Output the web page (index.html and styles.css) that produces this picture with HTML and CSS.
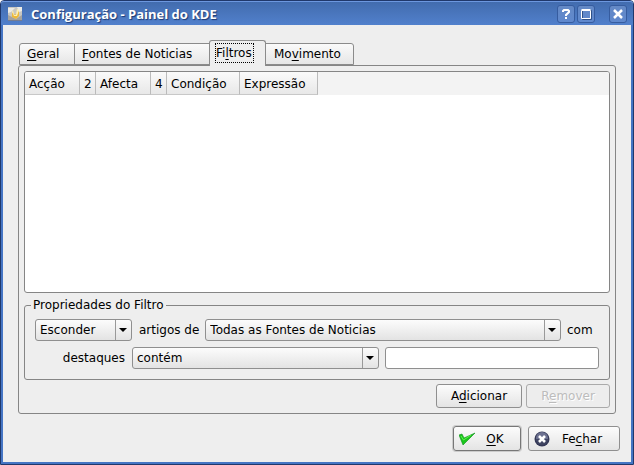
FILE: index.html
```html
<!DOCTYPE html>
<html lang="pt">
<head>
<meta charset="utf-8">
<title>Configuração - Painel do KDE</title>
<link rel="stylesheet" href="styles.css">
</head>
<body>
<div class="window">
  <header class="titlebar">
    <svg class="app-icon" viewBox="0 0 16 16" aria-hidden="true">
      <rect x="1" y="1" width="14" height="14" fill="#c9c7c1"/>
      <path d="M1 2h7L4 6l-3 1zM10 1h5v4l-3 1z" fill="#ecebe5"/>
      <path d="M1 9l4 2 4 2 6-4v5H1z" fill="#a5a39e"/>
      <path d="M5 6l3 3 4-4v5l-3 3-4-2z" fill="#edb93a"/>
      <path d="M6 4l1 5h2l1-6 2 1-2 6H7L5 6z" fill="#fff0b0"/>
      <path d="M1 14.500h14" stroke="#747c91"/>
    </svg>
    <h1 class="title">Configuração - Painel do KDE</h1>
    <button class="win-btn" type="button" aria-label="Ajuda">
      <svg viewBox="0 0 16 16"><path class="question" d="M5 6V5l1-1h4l1 1v1L8 9v1"/><path d="M7 11h2v2H7z"/></svg>
    </button>
    <button class="win-btn" type="button" aria-label="Maximizar">
      <svg viewBox="0 0 16 16"><path class="shade" d="M4.500 4.500h9v9h-9z"/><path class="line" d="M3.500 4.500h9v8h-9zM3.500 3.500h9"/></svg>
    </button>
    <button class="win-btn win-close" type="button" aria-label="Fechar janela">
      <svg viewBox="0 0 16 16"><path class="cross" d="M4 4l8 8M12 4l-8 8"/></svg>
    </button>
  </header>
  <main class="content">
    <div class="tabs" role="tablist">
      <button class="tab tab-geral" type="button" role="tab"><span><u>G</u>eral</span></button>
      <button class="tab tab-fontes" type="button" role="tab"><span><u>F</u>ontes de Noticias</span></button>
      <button class="tab active" type="button" role="tab" aria-selected="true"><span>Fi<u>l</u>tros</span></button>
      <button class="tab tab-mov" type="button" role="tab"><span>Mo<u>v</u>imento</span></button>
    </div>
    <section class="panel" role="tabpanel">
      <div class="list">
        <table class="filters">
          <colgroup><col class="c-action"><col class="c-num"><col class="c-affects"><col class="c-num"><col class="c-cond"><col class="c-expr"><col></colgroup>
          <thead><tr><th>Acção</th><th>2</th><th>Afecta</th><th>4</th><th>Condição</th><th>Expressão</th><td></td></tr></thead>
        </table>
      </div>
      <fieldset class="group">
        <legend>Propriedades do Filtro</legend>
        <div class="row">
          <span class="combo combo-action"><select id="action" aria-label="Acção"><option>Esconder</option></select></span>
          <label for="source">artigos de</label>
          <span class="combo combo-source"><select id="source"><option>Todas as Fontes de Noticias</option></select></span>
          <span class="with">com</span>
        </div>
        <div class="row">
          <label class="headlines" for="condition">destaques</label>
          <span class="combo combo-cond"><select id="condition"><option>contém</option></select></span>
          <input class="expression" type="text" aria-label="Expressão">
        </div>
      </fieldset>
      <div class="actions">
        <button class="btn" type="button">A<u>d</u>icionar</button>
        <button class="btn" type="button" disabled>R<u>e</u>mover</button>
      </div>
    </section>
    <footer class="footer">
      <button class="btn big ok" type="button">
        <svg viewBox="0 0 16 16"><path d="M0 4l3-1 2 4L16 2 4 14z" fill="#19c61b" stroke="#0b8f19" stroke-width=".6"/><path d="M2 5l2.500 4L12 4" fill="none" stroke="#63f050"/></svg>
        <span><u>O</u>K</span>
      </button>
      <button class="btn big close" type="button">
        <svg viewBox="0 0 16 16"><circle cx="8" cy="8" r="7.500" fill="#353957"/><circle cx="8" cy="7" r="6" fill="#6c7190"/><path d="M2 8a6 6 0 0 0 12 0z" fill="#414663"/><path d="M5 5l6 6M11 5l-6 6" stroke="#fff" stroke-width="2.600"/></svg>
        <span>Fe<u>c</u>har</span>
      </button>
    </footer>
  </main>
</div>
</body>
</html>
```
FILE: styles.css
```css
* { box-sizing: border-box; }

body {
  margin: 0;
  background: #fff;
  color: #000;
  font: 12px/16px "DejaVu Sans", sans-serif;
}

button, input, select { font: inherit; color: inherit; }
button { margin: 0; padding: 0; }
u { text-decoration-thickness: 1px; text-underline-offset: 2px; }

.window {
  display: flex;
  flex-direction: column;
  min-height: 100vh;
  border: 1px solid #20386b;
  border-radius: 4px 4px 0 0;
  background: #eee;
  box-shadow: inset 0 0 0 2px #4575c4;
  padding: 0 2px 2px;
}

.titlebar {
  display: flex;
  align-items: center;
  gap: 2px;
  height: 24px;
  margin: 0 -2px;
  padding: 0 6px;
  border-top: 1px solid #6c97df;
  border-radius: 3px 3px 0 0;
  background: linear-gradient(#426cae, #5180cc);
}
.app-icon { width: 16px; height: 16px; }
.title {
  flex: 1;
  margin: 0 0 0 6px;
  color: #fff;
  font: bold 13px/18px "Open Sans", sans-serif;
  text-shadow: 1px 1px 1px #1c3972;
}
.win-btn {
  width: 18px;
  height: 18px;
  border: 1px solid #365c9f;
  border-radius: 3px;
  background: linear-gradient(#6489c5, #5f88cd);
}
.win-btn svg { display: block; width: 16px; height: 16px; fill: none; stroke: none; }
.win-btn path { fill: #fff; }
.win-btn .line { fill: none; stroke: #fff; }
.win-btn .shade { fill: none; stroke: #2e5189; }
.win-btn .question { fill: none; stroke: #fff; stroke-width: 2; }
.win-btn .cross { stroke: #fff; stroke-width: 2.500; }
.win-close { margin-left: 12px; }

.content { display: flex; flex: 1; flex-direction: column; padding: 15px 11px 11px 15px; }

.tabs { display: flex; align-items: flex-end; height: 25px; padding-left: 1px; }
.tab {
  height: 22px;
  margin-right: -1px;
  padding: 0 7px 1px;
  border: 1px solid #8b8b8b;
  background: linear-gradient(#fafafa, #e6e6e6);
  text-align: left;
}
.tab-geral { width: 56px; border-radius: 3px 0 0 0; }
.tab-fontes { width: 136px; }
.tab-mov { width: 89px; padding-left: 8px; border-radius: 0 3px 0 0; }
.tab.active {
  position: relative;
  width: 57px;
  height: 26px;
  margin-bottom: -1px;
  padding: 0 6px 1px;
  border-bottom: 0;
  border-radius: 3px 3px 0 0;
  background: #eee;
}
.tab.active span { display: block; width: 37px; height: 18px; padding: 1px 0; outline: 1px dotted #000; }

.panel {
  display: flex;
  flex: 1;
  flex-direction: column;
  margin-right: 4px;
  padding: 5px;
  border: 1px solid #858585;
  border-radius: 3px;
}
.list {
  flex: 1;
  border: 1px solid #858585;
  border-radius: 3px;
  background: #fff;
  overflow: hidden;
}
.filters { width: 100%; table-layout: fixed; border-collapse: separate; border-spacing: 0; }
.filters th {
  height: 23px;
  padding: 1px 0 0 4px;
  border-right: 1px solid #bbb;
  border-bottom: 1px solid #c8c8c8;
  background: linear-gradient(#fafafa, #e8e8e8);
  font-weight: normal;
  text-align: left;
  white-space: nowrap;
}
.filters td { padding: 0; background: #f3f3f3; }
.c-action { width: 55px; }
.c-num { width: 16px; }
.c-affects { width: 55px; }
.c-cond { width: 73px; }
.c-expr { width: 78px; }

.group {
  min-width: 0;
  margin: 4px 0 0;
  padding: 6px 10px 10px;
  border: 1px solid #858585;
  border-radius: 3px;
}
.group legend { margin-left: -4px; padding: 0 2px; }
.row { display: flex; align-items: center; gap: 6px; white-space: nowrap; }
.row + .row { margin-top: 6px; }
.row label[for="source"] { padding-left: 1px; }
.combo { position: relative; display: block; }
.combo::before {
  position: absolute;
  top: 1px;
  right: 16px;
  bottom: 1px;
  border-left: 1px solid #999;
  content: "";
}
.combo::after {
  position: absolute;
  top: 9px;
  right: 5px;
  border: 4px solid transparent;
  border-top: 4px solid #000;
  border-bottom: 0;
  content: "";
  pointer-events: none;
}
.combo select {
  display: block;
  width: 100%;
  height: 22px;
  padding: 0 18px 1px 4px;
  border: 1px solid #8f8f8f;
  border-radius: 3px;
  background: linear-gradient(#fcfcfc, #e3e3e3);
  appearance: none;
}
.combo-action { width: 97px; }
.combo-source { flex: 1; }
.with { width: 32px; }
.headlines { width: 91px; padding-right: 1px; text-align: right; }
.combo-cond { flex: 248 1 0; }
.expression {
  flex: 213 1 0;
  min-width: 0;
  height: 22px;
  padding: 0;
  border: 1px solid #8f8f8f;
  border-radius: 3px;
  background: #fff;
}

.actions { display: flex; justify-content: flex-end; gap: 4px; margin-top: 4px; }
.btn {
  width: 86px;
  height: 24px;
  border: 1px solid #8f8f8f;
  border-radius: 3px;
  background: linear-gradient(#fcfcfc, #e4e4e4);
}
.btn:disabled { width: 84px; border-color: #aaa; color: #bcbcbc; background: #ededed; text-shadow: 1px 1px #fff; }

.footer { display: flex; justify-content: flex-end; gap: 7px; margin-top: 12px; }
.big { display: flex; align-items: center; height: 25px; padding: 0 5px; }
.big svg { width: 16px; height: 16px; }
.big span { flex: 1; text-align: center; }
.ok { width: 68px; border-color: #777; box-shadow: 0 0 0 1px #ccc; }
.close { width: 92px; }
```
